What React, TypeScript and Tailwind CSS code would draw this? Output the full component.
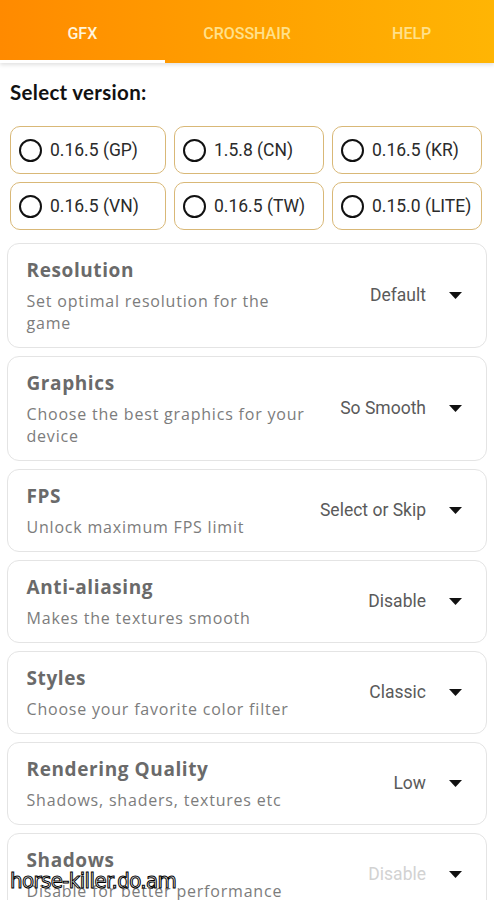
const versions = [
  "0.16.5 (GP)",
  "1.5.8 (CN)",
  "0.16.5 (KR)",
  "0.16.5 (VN)",
  "0.16.5 (TW)",
  "0.15.0 (LITE)",
];

const settings = [
  { title: "Resolution", desc: "Set optimal resolution for the game", value: "Default" },
  { title: "Graphics", desc: "Choose the best graphics for your device", value: "So Smooth" },
  { title: "FPS", desc: "Unlock maximum FPS limit", value: "Select or Skip" },
  { title: "Anti-aliasing", desc: "Makes the textures smooth", value: "Disable" },
  { title: "Styles", desc: "Choose your favorite color filter", value: "Classic" },
  { title: "Rendering Quality", desc: "Shadows, shaders, textures etc", value: "Low" },
  { title: "Shadows", desc: "Disable for better performance", value: "Disable", disabled: true },
];

export default function App() {
  return (
    <div className="relative w-[494px] h-[900px] overflow-hidden bg-white font-['Open_Sans',sans-serif]">
      <header className="flex h-[63px] bg-gradient-to-r from-[#ff8a00] via-[#ffa000] to-[#ffb504] shadow-[0_2px_4px_rgba(0,0,0,0.12)] font-['Roboto',sans-serif] font-medium text-[16px]">
        <Tab label="GFX" active />
        <Tab label="CROSSHAIR" />
        <Tab label="HELP" />
      </header>

      <h2 className="px-[10px] pt-[16px] font-['Lato',sans-serif] text-[20.5px] font-bold leading-[26px] tracking-[0.3px] text-[#111]">
        Select version:
      </h2>

      <div className="mt-[21px] ml-[10px] grid grid-cols-[156px_150px_150px] gap-x-[8px] gap-y-[8px]">
        {versions.map((v) => (
          <label
            key={v}
            className="flex h-[48px] items-center gap-[8px] rounded-[10px] border-[1.5px] border-[#d9b877] pl-[8px] font-['Roboto',sans-serif] text-[17.5px] text-[#2a2a2a]"
          >
            <span className="h-[23px] w-[23px] shrink-0 rounded-full border-[2.5px] border-[#111]" />
            {v}
          </label>
        ))}
      </div>

      <div className="mt-[13px] flex flex-col gap-[8px] px-[7px]">
        {settings.map((s) => (
          <SettingCard key={s.title} {...s} />
        ))}
      </div>

      <div className="absolute left-[10px] top-[869px] font-['DejaVu_Sans_Condensed',sans-serif] text-[22px] leading-[24px] tracking-[-0.6px] text-white [-webkit-text-stroke:1px_#000]">
        horse-killer.do.am
      </div>
    </div>
  );
}

function Tab({ label, active }: { label: string; active?: boolean }) {
  return (
    <div className="flex flex-1 flex-col">
      <div
        className={`flex flex-1 items-center justify-center pt-[8px] ${
          active ? "text-[#fff4da]" : "text-[#ffe08a]"
        }`}
      >
        {label}
      </div>
      <div className={`h-[3px] ${active ? "bg-white" : "bg-transparent"}`} />
    </div>
  );
}

interface SettingCardProps {
  title: string;
  desc: string;
  value: string;
  disabled?: boolean;
}

function SettingCard({ title, desc, value, disabled }: SettingCardProps) {
  return (
    <div className="flex items-center rounded-[12px] border-[1.5px] border-[#e4e4e4] bg-white pl-[18.5px] pr-[24px] pt-[13px] pb-[13px]">
      <div className="w-[284px]">
        <h3 className="text-[19px] font-bold leading-[26px] tracking-[0.6px] text-[#6a6a6a]">{title}</h3>
        <p className="mt-[7px] text-[16px] leading-[22px] tracking-[0.8px] text-[#7c7c7c]">{desc}</p>
      </div>
      <div className="ml-auto flex items-center gap-[23px] font-['Roboto',sans-serif] text-[17.5px]">
        <span className={disabled ? "text-[#d2d2d2]" : "text-[#5a5a5a]"}>{value}</span>
        <svg width="13" height="7" viewBox="0 0 13 7">
          <path d="M0 0 H13 L6.5 7 Z" fill="#111" />
        </svg>
      </div>
    </div>
  );
}
